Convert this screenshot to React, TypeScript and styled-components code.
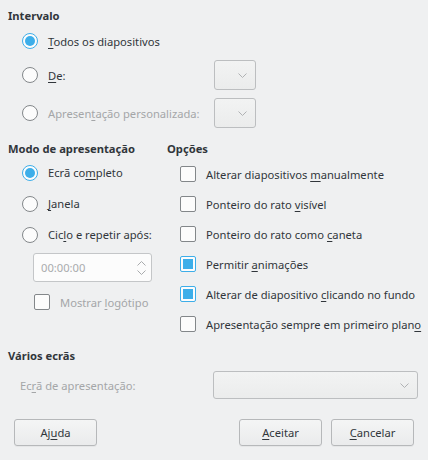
import React from "react";
import styled, { createGlobalStyle } from "styled-components";

const Global = createGlobalStyle`
  html, body { margin: 0; padding: 0; background: #eff0f1; }
  body { font-family: "Noto Sans", "Open Sans", sans-serif; font-size: 11.2px; color: #31363b; }
  * { box-sizing: border-box; }
`;

const Page = styled.div`
  width: 428px;
  height: 460px;
  background: #eff0f1;
  padding: 8px 10px 14px 8px;
  display: flex;
  flex-direction: column;
`;

const Heading = styled.div<{ $gap?: number }>`
  font-weight: bold;
  height: 16px;
  line-height: 16px;
  margin-top: ${(p) => p.$gap ?? 0}px;
`;

const RangeGrid = styled.div`
  display: grid;
  grid-template-columns: 192px 42px;
  grid-template-rows: 22px 30px 30px;
  row-gap: 8px;
  margin-top: 6px;
  padding-left: 14px;
  align-items: center;
`;

const Row = styled.label<{ $disabled?: boolean; $h?: number }>`
  display: flex;
  align-items: center;
  gap: 10px;
  height: ${(p) => p.$h ?? 30}px;
  color: ${(p) => (p.$disabled ? "#a4a6a8" : "#31363b")};
  white-space: nowrap;
`;

const Radio = styled.span<{ $checked?: boolean }>`
  width: 16px;
  height: 16px;
  flex: none;
  border-radius: 50%;
  border: 1px solid ${(p) => (p.$checked ? "#3daee9" : "#83878a")};
  background: #fcfcfc;
  display: flex;
  align-items: center;
  justify-content: center;
  &::after {
    content: "";
    display: ${(p) => (p.$checked ? "block" : "none")};
    width: 10px;
    height: 10px;
    border-radius: 50%;
    background: #3daee9;
  }
`;

const Check = styled.span<{ $checked?: boolean }>`
  width: 16px;
  height: 16px;
  flex: none;
  border-radius: 2px;
  border: 1px solid ${(p) => (p.$checked ? "#3daee9" : "#83878a")};
  background: #fcfcfc;
  display: flex;
  align-items: center;
  justify-content: center;
  &::after {
    content: "";
    display: ${(p) => (p.$checked ? "block" : "none")};
    width: 10px;
    height: 10px;
    background: #3daee9;
  }
`;

const U = styled.span`
  text-decoration: underline;
  text-underline-offset: 2px;
`;

const Combo = styled.div<{ $w?: string; $h?: number }>`
  width: ${(p) => p.$w ?? "42px"};
  height: ${(p) => p.$h ?? 30}px;
  border: 1px solid #bcbec0;
  border-radius: 3px;
  background: linear-gradient(#f2f3f3, #ebecec);
  display: flex;
  align-items: center;
  justify-content: flex-end;
  padding-right: 8px;
  color: #b0b2b4;
`;

const Columns = styled.div`
  display: grid;
  grid-template-columns: 159px 1fr;
  margin-top: 13px;
`;

const Col = styled.div`
  display: flex;
  flex-direction: column;
`;

const RadioList = styled.div`
  display: flex;
  flex-direction: column;
  padding-left: 14px;
`;

const CheckList = styled.div`
  display: flex;
  flex-direction: column;
  padding-left: 13px;
  margin-top: 2px;
`;

const Spin = styled.div`
  margin: 3px 0 0 25px;
  width: 119px;
  height: 29px;
  border: 1px solid #c4c6c8;
  border-radius: 3px;
  background: #fcfcfc;
  display: flex;
  align-items: center;
  justify-content: space-between;
  padding: 0 5px 0 7px;
  color: #a9abad;
`;

const SpinArrows = styled.div`
  display: flex;
  flex-direction: column;
  gap: 4px;
  color: #a9abad;
`;

const Indented = styled.div`
  padding-left: 26px;
  margin-top: 10px;
`;

const MonitorRow = styled.div`
  display: flex;
  align-items: center;
  justify-content: space-between;
  padding-left: 12px;
  margin-top: 7px;
  color: #a4a6a8;
`;

const Buttons = styled.div`
  display: flex;
  align-items: center;
  margin-top: 20px;
  padding: 0 4px 0 6px;
  gap: 9px;
`;

const Spacer = styled.div`
  flex: 1;
`;

const Button = styled.button`
  width: 83px;
  height: 27px;
  border: 1px solid #b6b8ba;
  border-radius: 3px;
  background: linear-gradient(#f4f5f5, #eaebec);
  font-family: "Noto Sans", "Open Sans", sans-serif;
  font-size: 11.2px;
  color: #31363b;
  padding: 0;
  box-shadow: 0 1px 0 rgba(0,0,0,0.04);
`;

const Chevron = ({ up }: { up?: boolean }) => (
  <svg width="9" height="5" viewBox="0 0 9 5" fill="none" stroke="currentColor" strokeWidth="1">
    {up ? <path d="M0.5 4.5 L4.5 0.5 L8.5 4.5" /> : <path d="M0.5 0.5 L4.5 4.5 L8.5 0.5" />}
  </svg>
);

export default function App() {
  return (
    <>
      <Global />
      <Page>
        <Heading>Intervalo</Heading>
        <RangeGrid>
          <Row $h={22}>
            <Radio $checked />
            <span><U>T</U>odos os diapositivos</span>
          </Row>
          <span />
          <Row>
            <Radio />
            <span><U>D</U>e:</span>
          </Row>
          <Combo><Chevron /></Combo>
          <Row $disabled>
            <Radio />
            <span>Apresen<U>t</U>ação personalizada:</span>
          </Row>
          <Combo><Chevron /></Combo>
        </RangeGrid>

        <Columns>
          <Col>
            <Heading>Modo de apresentação</Heading>
            <RadioList>
              <Row $h={31}>
                <Radio $checked />
                <span>Ecrã co<U>m</U>pleto</span>
              </Row>
              <Row $h={31}>
                <Radio />
                <span><U>J</U>anela</span>
              </Row>
              <Row $h={31}>
                <Radio />
                <span>Cic<U>l</U>o e repetir após:</span>
              </Row>
            </RadioList>
            <Spin>
              <span>00:00:00</span>
              <SpinArrows>
                <Chevron up />
                <Chevron />
              </SpinArrows>
            </Spin>
            <Indented>
              <Row $disabled $h={20}>
                <Check />
                <span>Mostrar <U>l</U>ogótipo</span>
              </Row>
            </Indented>
          </Col>
          <Col>
            <Heading>Opções</Heading>
            <CheckList>
              <Row>
                <Check />
                <span>Alterar diapositivos <U>m</U>anualmente</span>
              </Row>
              <Row>
                <Check />
                <span>Ponteiro do rato <U>v</U>isível</span>
              </Row>
              <Row>
                <Check />
                <span>Ponteiro do rato como <U>c</U>aneta</span>
              </Row>
              <Row>
                <Check $checked />
                <span>Permitir <U>a</U>nimações</span>
              </Row>
              <Row>
                <Check $checked />
                <span>Alterar de diapositivo <U>c</U>licando no fundo</span>
              </Row>
              <Row>
                <Check />
                <span>Apresentação sempre em primeiro plan<U>o</U></span>
              </Row>
            </CheckList>
          </Col>
        </Columns>

        <Heading $gap={9}>Vários ecrãs</Heading>
        <MonitorRow>
          <span>Ec<U>r</U>ã de apresentação:</span>
          <Combo $w="205px" $h={28}><Chevron /></Combo>
        </MonitorRow>

        <Buttons>
          <Button>Aj<U>u</U>da</Button>
          <Spacer />
          <Button><U>A</U>ceitar</Button>
          <Button><U>C</U>ancelar</Button>
        </Buttons>
      </Page>
    </>
  );
}
